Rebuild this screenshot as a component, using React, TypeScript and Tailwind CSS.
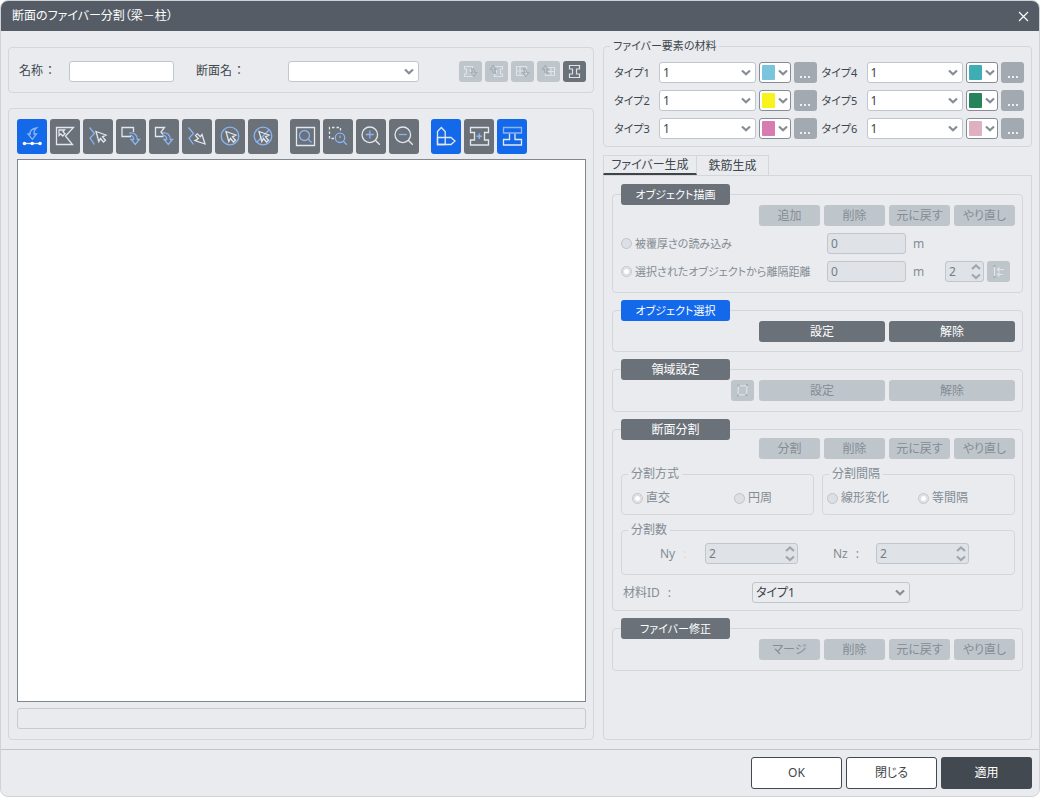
import * as React from 'react';
import {clsx} from 'clsx';

type IconProps = {
  children: React.ReactNode
};

const materialTypes = [
  {id: 1, color: '#79c5dc'},
  {id: 4, color: '#3eaeb4'},
  {id: 2, color: '#f8f21d'},
  {id: 5, color: '#27835a'},
  {id: 3, color: '#d77bb1'},
  {id: 6, color: '#dfb0c0'},
];

const CURSOR = 'M11 12.5 21 16 17.5 17.8 20.5 21.3 18.5 23 15.5 19.5 13.8 22.5Z';
const BEND_ARROW = 'M13.5 14C18 13 21.5 16 21.3 20.5H23.5L19.3 25.5 15 20.5H17.7C17.7 18 16.5 16 13.5 16.5';
const ZIGZAG = 'M6.5 8.5 11.5 14.5 7 19 11.5 25.5';
const I_SHAPE = 'M6.5 8.5H24.5V13.5H20.5V21H24.5V26H6.5V21H10.5V13.5H6.5Z';

function ToolIcon({children}: IconProps) {
  return (
    <svg width="30" height="35" viewBox="0 0 30 35" fill="none" stroke="#e4e7eb" strokeWidth="1.3" aria-hidden="true">
      {children}
    </svg>
  );
}

function SmallIcon({children}: IconProps) {
  return (
    <svg width="23" height="21" viewBox="0 0 23 21" fill="none" stroke="#dfe2e6" strokeWidth="1.2" aria-hidden="true">
      {children}
    </svg>
  );
}

const BLUE = '#8bb5f2';

const toolGroups = [
  [
    {
      name: '点の追加', active: true, icon: <>
        <path stroke={BLUE} d="M19.5 9C15 9.5 12.8 12 13.2 15H11L15.3 20.3 19.5 15H17C16.8 12.5 17.5 10.5 19.5 9Z"/>
        <path d="M7.5 24.5H23"/>
        <g fill="#fff" stroke="none">
          <circle cx="7.5" cy="24.5" r="1.8"/>
          <circle cx="15.2" cy="24.5" r="1.8"/>
          <circle cx="23" cy="24.5" r="1.8"/>
        </g>
      </>
    },
    {
      name: '領域の選択', icon: <>
        <path d="M6.5 8.5H23.5L15.5 17 22.5 25.5H6.5Z"/>
        <path d="M9 11H14.5L13 12.8 15 14.8 12.8 17 10.8 15 9 16.5Z"/>
      </>
    },
    {
      name: '線の選択', icon: <>
        <path stroke={BLUE} d={ZIGZAG}/>
        <path d="M13 12.5 23 16 19.5 17.8 22.5 21.3 20.5 23 17.5 19.5 15.8 22.5Z"/>
      </>
    },
    {
      name: '矩形の移動', icon: <>
        <path d="M15 17.5H6V8.5H17.5V13"/>
        <path stroke={BLUE} d={BEND_ARROW}/>
      </>
    },
    {
      name: '多角形の移動', icon: <>
        <path d="M14.5 17.5H6.5V8.5H15.5L12 13 14 15.5"/>
        <path stroke={BLUE} d={BEND_ARROW}/>
      </>
    },
    {
      name: '線の移動', icon: <>
        <path stroke={BLUE} d={ZIGZAG}/>
        <path d="M23 25 13 21.5 16.3 19.5 13.5 16.5 15.3 14.8 18.3 17.8 20 15.5Z"/>
      </>
    },
    {
      name: '全選択', icon: <>
        <circle cx="15" cy="17" r="8.8" stroke={BLUE}/>
        <path d={CURSOR}/>
      </>
    },
    {
      name: '選択解除', icon: <>
        <circle cx="15" cy="17" r="8.8" stroke={BLUE}/>
        <path stroke={BLUE} d="M9 23 21.3 10.8"/>
        <path d={CURSOR}/>
      </>
    },
  ],
  [
    {
      name: '全体表示', icon: <>
        <path d="M6.5 8.5H24.5V26.5H6.5Z"/>
        <circle cx="14.5" cy="16.5" r="5" stroke={BLUE}/>
        <path stroke={BLUE} d="M18 20 21.5 23.5"/>
      </>
    },
    {
      name: '窓拡大', icon: <>
        <path strokeDasharray="2.5 2" d="M11 19.5H6.5V8.5H17.5V13"/>
        <circle cx="17" cy="18.8" r="4.7" stroke={BLUE}/>
        <path stroke={BLUE} d="M20.3 22.2 23.8 25.7M17 16.5V19"/>
      </>
    },
    {
      name: '拡大', icon: <>
        <circle cx="13.8" cy="15.8" r="7.8"/>
        <path d="M19.3 21.3 23.8 25.8"/>
        <path stroke={BLUE} d="M9.8 15.5H17.8M13.8 11.5V19.5"/>
      </>
    },
    {
      name: '縮小', icon: <>
        <circle cx="13.8" cy="15.8" r="7.8"/>
        <path d="M19.3 21.3 23.8 25.8"/>
        <path stroke={BLUE} d="M9.8 15.5H17.8"/>
      </>
    },
  ],
  [
    {
      name: '図形', active: true, icon: <>
        <path d="M6.5 25.5V12.5L10.3 8.5 14.2 12.5V25.5Z"/>
        <path d="M6.5 18.5H20L24 22 20 25.5H6.5Z"/>
      </>
    },
    {
      name: '断面中心', icon: <>
        <path d={I_SHAPE}/>
        <path stroke={BLUE} strokeWidth="1.6" d="M12.5 17.3H18M15.3 14.5V20"/>
      </>
    },
    {
      name: '断面外形', active: true, icon: <>
        <path d="M12.5 14.5V20.5H6.5V26H24.5V20.5H18V14.5"/>
        <path stroke={BLUE} d="M6.5 8.5H24.5V14H6.5Z"/>
      </>
    },
  ],
];

const SMALL_DOWN = 'M12.5 7.5C14.8 7.5 15.8 9.3 15.7 11.5H17.8L14.8 15.5 11.8 11.5H13.6Z';
const SMALL_UP = 'M10.8 12.5C8.2 12.5 7.3 11 7.4 8.5H5.3L8.2 4.5 11.2 8.5H9.5Z';

const sectionTools = [
  <SmallIcon key="import">
    <path d="M5.5 5.5H13.5V8H11.5V13H13.5V15.5H5.5V13H7.5V8H5.5Z"/>
    <path stroke="#a6aeb6" d={SMALL_DOWN}/>
  </SmallIcon>,
  <SmallIcon key="export">
    <path d="M9.5 5.5H17.5V8H15.5V13H17.5V15.5H9.5V13H11.5V8"/>
    <path stroke="#a6aeb6" d={SMALL_UP}/>
  </SmallIcon>,
  <SmallIcon key="table-in">
    <path d="M5.5 5.5H15.5V14.5H5.5ZM5.5 10H15.5M9 5.5V14.5"/>
    <path stroke="#a6aeb6" d={SMALL_DOWN}/>
  </SmallIcon>,
  <SmallIcon key="table-out">
    <path d="M9.5 6.5H17.5V14.5H8.5V12M11 10.5H17.5M14 6.5V14.5"/>
    <path stroke="#a6aeb6" d={SMALL_UP}/>
  </SmallIcon>,
];

function Chevron() {
  return (
    <svg
      className="pointer-events-none shrink-0"
      width="10" height="7" viewBox="0 0 10 7" fill="none" stroke="#858d95" strokeWidth="2.2" aria-hidden="true">
      <path d="M1 1.5 5 5.2 9 1.5"/>
    </svg>
  );
}

type SelectProps = {
  id: string
  value: string
  className?: string
  plain?: boolean
};

function Select({id, value, className, plain}: SelectProps) {
  return (
    <div className={clsx('relative', className)}>
      <select
        id={id}
        defaultValue={value}
        className={clsx(
          'block h-[21px] w-full appearance-none rounded-[3px] border border-[#bfc6cd] pr-5 pl-[3px] text-[12px] leading-[19px] text-[#3c4248] outline-none',
          plain ? 'bg-[#e9ebef]' : 'bg-white'
        )}>
        <option value={value}>{value}</option>
      </select>
      <div className="pointer-events-none absolute inset-y-0 right-[5px] flex items-center">
        <Chevron/>
      </div>
    </div>
  );
}

function MaterialRow({id, color}: { id: number, color: string }) {
  return (
    <div className="flex items-center gap-[3px]">
      <label htmlFor={`material-${id}`} className="w-[42px] whitespace-nowrap text-[11px]">タイプ{id}</label>
      <Select id={`material-${id}`} value="1" className="flex-1"/>
      <button
        type="button"
        aria-label={`タイプ${id}の色`}
        className="flex h-[21px] w-8 items-center justify-between rounded-[3px] border border-[#858c93] bg-white px-[2px]">
        <span className="h-[15px] w-[13px] rounded-[1px]" style={{backgroundColor: color}}/>
        <Chevron/>
      </button>
      <button
        type="button"
        aria-label={`タイプ${id}の詳細`}
        className="flex h-[21px] w-[23px] items-end justify-center gap-[2px] rounded-[3px] bg-[#a2a9b1] pb-[5px]">
        <span className="size-[2px] bg-[#eceef0]"/>
        <span className="size-[2px] bg-[#eceef0]"/>
        <span className="size-[2px] bg-[#eceef0]"/>
      </button>
    </div>
  );
}

type ActionProps = {
  labels: string[]
  enabled?: boolean
};

function Actions({labels, enabled}: ActionProps) {
  return (
    <div className="flex w-64 gap-1">
      {labels.map(label => (
        <button
          key={label}
          type="button"
          disabled={!enabled}
          className={clsx(
            'h-[21px] flex-1 rounded-[3px] whitespace-nowrap',
            enabled ? 'bg-[#6a7179] text-white' : 'bg-[#bec6cc] text-[#858c93]'
          )}>
          {label}
        </button>
      ))}
    </div>
  );
}

type SectionProps = {
  title: string
  active?: boolean
  compact?: boolean
  children: React.ReactNode
};

function Section({title, active, compact, children}: SectionProps) {
  return (
    <fieldset className="min-w-0 rounded-[4px] border border-[#d3d6db] pr-[7px] pl-2">
      <legend>
        <button
          type="button"
          className={clsx(
            'block h-[21px] w-[109px] rounded-[3px] text-white',
            active ? 'bg-[#1469eb]' : 'bg-[#6a7179]',
            compact && 'text-[11px]'
          )}>
          {title}
        </button>
      </legend>
      {children}
    </fieldset>
  );
}

type RadioProps = {
  name: string
  label: string
  checked?: boolean
  className?: string
};

function Radio({name, label, checked, className}: RadioProps) {
  return (
    <label className={clsx('flex items-center gap-[3px] whitespace-nowrap text-[#858c93]', className)}>
      <input
        type="radio"
        name={name}
        defaultChecked={checked}
        disabled
        className="size-[11px] shrink-0 appearance-none rounded-full border border-[#bfc4ca] bg-[#dcdfe4] checked:bg-white checked:shadow-[inset_0_0_0_2px_#dcdfe4]"
      />
      {label}
    </label>
  );
}

function Spinner({id, label, className}: { id: string, label?: string, className: string }) {
  return (
    <div className={clsx('flex h-[21px] items-center rounded-[3px] border border-[#bfc6cd] bg-[#dfe2e7] pr-[2px]', className)}>
      <input
        id={id}
        type="text"
        aria-label={label}
        defaultValue="2"
        disabled
        className="h-full w-0 min-w-0 flex-1 bg-transparent pl-[3px] text-[12px] text-[#757c83]"
      />
      <svg width="10" height="17" viewBox="0 0 10 17" fill="none" stroke="#a0a7ae" strokeWidth="2.2" aria-hidden="true">
        <path d="M1 6 5 2.5 9 6M1 11.5 5 15 9 11.5"/>
      </svg>
    </div>
  );
}

function Distance({label}: { label: string }) {
  return (
    <input
      type="text"
      aria-label={label}
      defaultValue="0"
      disabled
      className="h-[21px] w-[79px] rounded-[3px] border border-[#bfc6cd] bg-[#dfe2e7] px-[3px] text-[12px] text-[#757c83]"
    />
  );
}

function SubGroup({title, className, children}: { title: string, className?: string, children: React.ReactNode }) {
  return (
    <fieldset className={clsx('min-w-0 rounded-[4px] border border-[#d3d6db] px-1', className)}>
      <legend className="ml-[2px] px-[3px] leading-4">{title}</legend>
      {children}
    </fieldset>
  );
}

function LeftColumn() {
  return (
    <div className="flex min-w-0 flex-1 flex-col gap-[15px] pt-[10px]">
      <div className="flex h-[46px] items-center rounded-[4px] border border-[#d3d6db] pt-[2px] pr-[7px] pl-[10px]">
        <label htmlFor="name" className="flex w-[50px] gap-1 whitespace-nowrap">名称<span>：</span></label>
        <input id="name" type="text" className="h-[21px] w-[105px] rounded-[3px] border border-[#bfc6cd] bg-white px-1"/>
        <label htmlFor="section" className="ml-[22px] flex w-[92px] gap-1 whitespace-nowrap">断面名<span>：</span></label>
        <Select id="section" value="" className="w-[131px]"/>
        <div className="ml-auto flex gap-[3px]">
          {sectionTools.map(icon => (
            <button
              key={icon.key}
              type="button"
              disabled
              aria-label={String(icon.key)}
              className="rounded-[3px] bg-[#bec6cc]">
              {icon}
            </button>
          ))}
          <button type="button" aria-label="断面" className="rounded-[3px] bg-[#6a7179]">
            <SmallIcon>
              <path d="M6.5 4.5H16.5V8H13.5V13H16.5V16.5H6.5V13H9.5V8H6.5Z"/>
            </SmallIcon>
          </button>
        </div>
      </div>

      <div className="flex flex-1 flex-col rounded-[4px] border border-[#d3d6db] py-[10px] pr-[7px] pl-2">
        <div className="flex gap-3">
          {toolGroups.map((group, i) => (
            <div key={i} className="flex gap-[3px]">
              {group.map(tool => (
                <button
                  key={tool.name}
                  type="button"
                  aria-label={tool.name}
                  className={clsx('rounded-[3px]', tool.active ? 'bg-[#1469eb]' : 'bg-[#6a7179]')}>
                  <ToolIcon>{tool.icon}</ToolIcon>
                </button>
              ))}
            </div>
          ))}
        </div>
        <div className="mt-[5px] flex-1 border border-[#80878e] bg-white"/>
        <input
          type="text"
          readOnly
          aria-label="メッセージ"
          className="mt-[6px] h-[21px] w-full rounded-[3px] border border-[#c5cbd1] px-1"
        />
      </div>
    </div>
  );
}

function FiberPanel() {
  return (
    <div className="flex flex-1 flex-col gap-[7px] rounded-b-[4px] border border-[#d3d6db] px-2 pt-2">
      <Section title="オブジェクト描画" compact>
        <div className="flex flex-col items-end gap-[7px] pb-[10px] text-[#858c93]">
          <Actions labels={['追加', '削除', '元に戻す', 'やり直し']}/>
          <div className="flex w-full items-center">
            <Radio name="draw" label="被覆厚さの読み込み" className="flex-1 text-[11px]"/>
            <div className="flex w-[188px] items-center">
              <Distance label="被覆厚さ"/>
              <span className="ml-[7px]">m</span>
            </div>
          </div>
          <div className="flex w-full items-center">
            <Radio name="draw" label="選択されたオブジェクトから離隔距離" checked className="flex-1 text-[11px]"/>
            <div className="flex w-[188px] items-center">
              <Distance label="離隔距離"/>
              <span className="ml-[7px] w-8">m</span>
              <Spinner id="offset-count" label="個数" className="w-[39px]"/>
              <button type="button" disabled aria-label="オフセット" className="ml-[3px] rounded-[3px] bg-[#bec6cc]">
                <SmallIcon>
                  <path d="M7.5 5V16M17 8.5H10.5M12.5 6.5 10.5 8.5 12.5 10.5M16 13.5H10.5M12.5 11.5 10.5 13.5 12.5 15.5"/>
                  <path stroke="#a6aeb6" strokeWidth="2" d="M6.5 5H8.5M6.5 16H8.5"/>
                </SmallIcon>
              </button>
            </div>
          </div>
        </div>
      </Section>

      <Section title="オブジェクト選択" active compact>
        <div className="flex justify-end pb-[9px]">
          <Actions labels={['設定', '解除']} enabled/>
        </div>
      </Section>

      <Section title="領域設定">
        <div className="flex justify-end gap-[5px] pb-[10px]">
          <button type="button" disabled aria-label="領域" className="rounded-[3px] bg-[#bec6cc]">
            <SmallIcon>
              <path d="M7.5 6 16 5.5 15.5 14.5 7 15Z"/>
              <path stroke="#a6aeb6" strokeWidth="2" d="M6.5 5.5H8.5M15 5H17M14.5 15H16.5M6 15.5H8"/>
            </SmallIcon>
          </button>
          <Actions labels={['設定', '解除']}/>
        </div>
      </Section>

      <Section title="断面分割">
        <div className="-mt-0.5 flex flex-col text-[#858c93]">
          <div className="flex justify-end">
            <Actions labels={['分割', '削除', '元に戻す', 'やり直し']}/>
          </div>
          <div className="mt-[7px] flex gap-2">
            <SubGroup title="分割方式" className="flex-1">
              <div className="flex pt-2 pb-2 pl-[6px] leading-4">
                <Radio name="method" label="直交" checked className="w-[102px]"/>
                <Radio name="method" label="円周"/>
              </div>
            </SubGroup>
            <SubGroup title="分割間隔" className="flex-1">
              <div className="flex pt-2 pb-2 leading-4">
                <Radio name="interval" label="線形変化" className="w-[91px]"/>
                <Radio name="interval" label="等間隔" checked/>
              </div>
            </SubGroup>
          </div>
          <SubGroup title="分割数" className="mt-[7px]">
            <div className="flex items-center pt-[5px] pb-[10px] pl-[34px]">
              <label htmlFor="ny" className="flex w-[45px] gap-2">Ny <span className="text-[#e3d9cf]">:</span></label>
              <Spinner id="ny" className="w-[93px]"/>
              <label htmlFor="nz" className="ml-[35px] flex w-[43px] gap-2">Nz <span>:</span></label>
              <Spinner id="nz" className="w-[93px]"/>
            </div>
          </SubGroup>
          <div className="mt-[7px] flex items-center pb-[7px] pl-[2px]">
            <label htmlFor="material-id" className="flex w-[129px] gap-2">材料ID <span>:</span></label>
            <Select id="material-id" value="タイプ1" plain className="w-[158px]"/>
          </div>
        </div>
      </Section>

      <Section title="ファイバー修正" compact>
        <div className="flex justify-end pb-[10px]">
          <Actions labels={['マージ', '削除', '元に戻す', 'やり直し']}/>
        </div>
      </Section>
    </div>
  );
}

function RightColumn() {
  return (
    <div className="flex w-[429px] shrink-0 flex-col">
      <fieldset className="rounded-[4px] border border-[#d3d6db] px-[6px]">
        <legend className="px-[3px] text-[11px] leading-[18px]">ファイバー要素の材料</legend>
        <div className="grid grid-cols-2 gap-x-[5px] gap-y-[7px] py-[7px] pr-px pl-1">
          {materialTypes.map(type => (
            <MaterialRow key={type.id} id={type.id} color={type.color}/>
          ))}
        </div>
      </fieldset>

      <div role="tablist" className="mt-2 flex h-5">
        <button
          role="tab"
          type="button"
          aria-selected="true"
          className="w-[94px] border border-b-2 border-[#d3d6db] border-b-[#3f444a] whitespace-nowrap">
          ファイバー生成
        </button>
        <button
          role="tab"
          type="button"
          aria-selected="false"
          className="w-[72px] border-t border-r border-[#d3d6db] whitespace-nowrap">
          鉄筋生成
        </button>
      </div>
      <FiberPanel/>
    </div>
  );
}

export default function App() {
  return (
    <div
      className="flex min-h-screen flex-col rounded-[8px] border border-[#cfd3d7] bg-[#e9ebef] font-['Noto_Sans','Noto_Sans_CJK_JP',sans-serif] text-[12px] leading-4 text-[#40464c] [font-feature-settings:'palt']">
      <header className="flex h-[30px] items-center justify-between rounded-t-[7px] bg-[#555c65] pr-[10px] pl-[11px] text-white">
        <h1>断面のファイバー分割（梁－柱）</h1>
        <button type="button" aria-label="閉じる">
          <svg width="11" height="11" viewBox="0 0 11 11" stroke="#fff" strokeWidth="1.2" aria-hidden="true">
            <path d="M1 1 10 10M10 1 1 10"/>
          </svg>
        </button>
      </header>

      <main className="flex flex-1 gap-[9px] px-[7px] pt-[6px] pb-[9px]">
        <LeftColumn/>
        <RightColumn/>
      </main>

      <footer className="flex justify-end gap-1 border-t border-[#bfc6cd] p-[7px]">
        <button type="button" className="h-8 w-[91px] rounded-[3px] border border-[#434950] bg-white">OK</button>
        <button type="button" className="h-8 w-[91px] rounded-[3px] border border-[#434950] bg-white">閉じる</button>
        <button type="button" className="h-8 w-[91px] rounded-[3px] bg-[#434950] text-white">適用</button>
      </footer>
    </div>
  );
}
